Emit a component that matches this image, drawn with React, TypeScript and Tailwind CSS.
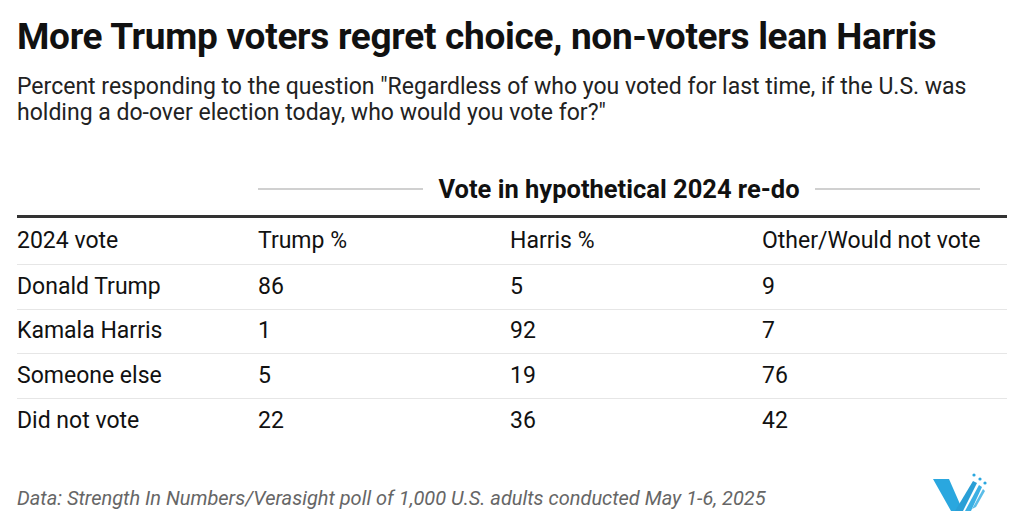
const rows = [
  { label: "Donald Trump", trump: "86", harris: "5", other: "9" },
  { label: "Kamala Harris", trump: "1", harris: "92", other: "7" },
  { label: "Someone else", trump: "5", harris: "19", other: "76" },
  { label: "Did not vote", trump: "22", harris: "36", other: "42" },
];

function Logo() {
  return (
    <svg width="60" height="46" viewBox="0 0 60 46" className="block">
      <path d="M2 14 L18 14 L32 46 L20 46 Z" fill="#2aa7df" />
      <path d="M24 46 L42 16 L46 18 L32 46 Z" fill="#2a9fd6" />
      <path d="M34 46 L48 20 L51 22 L40 46 Z" fill="#3bb0e4" />
      <path d="M41 44 L52 24 L54 26 L45 42 Z" fill="#5bbde8" />
      <circle cx="43" cy="10" r="1.6" fill="#2aa7df" />
      <circle cx="49" cy="14" r="1.6" fill="#2aa7df" />
      <circle cx="54" cy="18" r="1.6" fill="#2aa7df" />
    </svg>
  );
}

export default function App() {
  return (
    <div
      className="w-[1024px] h-[512px] overflow-hidden bg-white text-[#111] px-[17px]"
      style={{ fontFamily: "Roboto, 'Liberation Sans', sans-serif" }}
    >
      <h1 className="text-[37px] leading-[42px] font-bold tracking-[-0.3px] pt-[16px] whitespace-nowrap">
        More Trump voters regret choice, non-voters lean Harris
      </h1>
      <p className="text-[23px] leading-[26px] text-[#222] mt-[16px] whitespace-nowrap">
        Percent responding to the question "Regardless of who you voted for last time, if the U.S. was
        <br />
        holding a do-over election today, who would you vote for?"
      </p>

      <div className="mt-[47px] w-[990px]">
        <div className="flex items-center h-[32px] pl-[241px] pr-[27px]">
          <div className="flex-1 h-[2px] bg-[#d0d0d0]" />
          <div className="px-[15px] text-[25.5px] font-bold whitespace-nowrap">Vote in hypothetical 2024 re-do</div>
          <div className="flex-1 h-[2px] bg-[#d0d0d0]" />
        </div>
        <div className="mt-[10px] h-[3px] bg-[#333]" />
        <div className="grid grid-cols-[241px_252px_252px_1fr] text-[23px] h-[47px] items-center border-b border-[#e6e6e6]">
          <div>2024 vote</div>
          <div>Trump %</div>
          <div>Harris %</div>
          <div>Other/Would not vote</div>
        </div>
        {rows.map((r, i) => (
          <div
            key={r.label}
            className={
              "grid grid-cols-[241px_252px_252px_1fr] text-[23px] h-[44.5px] items-center" +
              (i < rows.length - 1 ? " border-b border-[#e6e6e6]" : "")
            }
          >
            <div>{r.label}</div>
            <div>{r.trump}</div>
            <div>{r.harris}</div>
            <div>{r.other}</div>
          </div>
        ))}
      </div>

      <div className="flex items-start justify-between mt-[22px]">
        <p className="italic text-[20px] text-[#666] leading-[24px] mt-[21px] whitespace-nowrap">
          Data: Strength In Numbers/Verasight poll of 1,000 U.S. adults conducted May 1-6, 2025
        </p>
        <div className="mr-[16px]">
          <Logo />
        </div>
      </div>
    </div>
  );
}
